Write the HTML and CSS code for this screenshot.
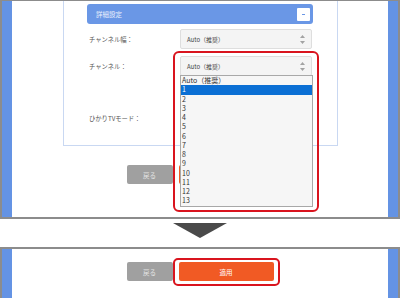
FILE: index.html
```html
<!DOCTYPE html>
<html lang="ja">
<head>
    <meta charset="UTF-8">
    <meta name="viewport" content="width=device-width, initial-scale=1.0">
    <title>詳細設定 - チャンネル</title>
    <link rel="stylesheet" href="styles.css">
</head>
<body>
    <!-- Before: channel dropdown opened -->
    <div class="panel panel-top">
        <div class="page">
            <div class="settings">
                <div class="bar">
                    <span>詳細設定</span>
                    <span class="toggle"></span>
                </div>

                <div class="row r1">
                    <span class="label">チャンネル幅：</span>
                    <div class="select">Auto（推奨）
                        <svg class="arrows" viewBox="0 0 5 9"><polygon points="2.5,0 5,3 0,3"/><polygon points="0,6 5,6 2.5,9"/></svg>
                    </div>
                </div>

                <div class="row r2">
                    <span class="label">チャンネル：</span>
                    <div class="field">
                        <div class="select">Auto（推奨）
                            <svg class="arrows" viewBox="0 0 5 9"><polygon points="2.5,0 5,3 0,3"/><polygon points="0,6 5,6 2.5,9"/></svg>
                        </div>
                        <ul class="listbox">
                            <li>Auto（推奨）</li>
                            <li class="sel">1</li>
                            <li>2</li>
                            <li>3</li>
                            <li>4</li>
                            <li>5</li>
                            <li>6</li>
                            <li>7</li>
                            <li>8</li>
                            <li>9</li>
                            <li>10</li>
                            <li>11</li>
                            <li>12</li>
                            <li>13</li>
                        </ul>
                        <div class="mark"></div>
                    </div>
                </div>

                <div class="row r3">
                    <span class="label">ひかりTVモード：</span>
                    <div class="select">オフ</div>
                </div>
            </div>

            <div class="actions top-actions">
                <button class="btn back">戻る</button>
                <button class="btn apply">適用</button>
            </div>
        </div>
    </div>

    <div class="gap"><div class="down"></div></div>

    <!-- After: press apply -->
    <div class="panel panel-bottom">
        <div class="page">
            <div class="actions bottom-actions">
                <button class="btn back">戻る</button>
                <button class="btn apply marked">適用</button>
            </div>
        </div>
    </div>
</body>
</html>
```

FILE: styles.css
```css
body {
    margin: 0;
    width: 400px;
    background: #fff;
    font-family: "Noto Sans CJK JP", "Noto Sans", sans-serif;
}
.panel {
    border: 2px solid #8c8c8c;
    border-top-width: 1px;
}
.panel-bottom {
    border-top-width: 2px;
}
.page {
    border-left: 10px solid #6493e4;
    border-right: 10px solid #6493e4;
    background: #fff;
}
.panel-top .page {
    height: 216px;
}
.panel-bottom .page {
    height: 51px;
}
.settings {
    margin: 0 50px 0 51px;
    border: 1px solid #c9d8f2;
    border-top: 0;
    padding: 3px 24px 17px 23px;
}
.bar {
    height: 20px;
    background: #6a97e6;
    border-radius: 3px;
    display: flex;
    align-items: center;
    justify-content: space-between;
    padding: 0 3px 0 9px;
    color: #e9effc;
    font-size: 6.5px;
}
.toggle {
    width: 13px;
    height: 13px;
    background: #fff;
    border-radius: 1px;
    position: relative;
}
.toggle::after {
    content: '';
    position: absolute;
    left: 5px;
    top: 6px;
    width: 3px;
    height: 1px;
    background: #6a97e6;
}
.row {
    display: flex;
    align-items: center;
    height: 20px;
}
.r1 {
    margin-top: 5px;
}
.r2 {
    margin-top: 7px;
}
.r3 {
    margin-top: 32px;
}
.label {
    width: 93px;
    padding-left: 2px;
    box-sizing: border-box;
    font-size: 6.3px;
    color: #555;
}
.field {
    position: relative;
}
.select {
    position: relative;
    width: 132px;
    height: 20px;
    box-sizing: border-box;
    border: 1px solid #dedede;
    background: #f4f4f4;
    border-radius: 2px;
    display: flex;
    align-items: center;
    padding-left: 6px;
    font-size: 6px;
    color: #444;
}
.arrows {
    position: absolute;
    right: 6px;
    top: 5px;
    width: 5px;
    height: 9px;
    fill: #a2a2a2;
}
.listbox {
    position: absolute;
    top: 19px;
    left: 0;
    width: 133px;
    height: 132px;
    box-sizing: border-box;
    margin: 0;
    padding: 0;
    list-style: none;
    border: 1px solid #a8a8a8;
    background: #f6f6f6;
    overflow: hidden;
    z-index: 2;
}
.listbox li {
    height: 9.27px;
    line-height: 9.27px;
    padding-left: 1px;
    font-size: 7px;
    color: #333;
}
.listbox .sel {
    background: #0b6fd4;
    color: #fff;
}
.mark {
    position: absolute;
    left: -7px;
    top: -5px;
    width: 146px;
    height: 161px;
    box-sizing: border-box;
    border: 2px solid #d9141e;
    border-radius: 6px;
    z-index: 3;
}
.actions {
    display: flex;
    justify-content: center;
    gap: 6px;
}
.top-actions {
    margin-top: 19px;
}
.bottom-actions {
    padding-top: 13px;
}
.btn {
    height: 19px;
    border: 0;
    border-radius: 2px;
    padding: 0;
    font-family: inherit;
    font-size: 6.5px;
    color: #fff;
}
.back {
    width: 46px;
    background: #a0a0a0;
    color: #e4e4e4;
}
.apply {
    width: 95px;
    background: #f15a24;
}
.marked {
    position: relative;
}
.marked::after {
    content: '';
    position: absolute;
    left: -6px;
    right: -6px;
    top: -4px;
    bottom: -5px;
    border: 2px solid #d9141e;
    border-radius: 5px;
}
.gap {
    height: 24px;
}
.down {
    width: 0;
    height: 0;
    margin: 4px auto 0;
    border-left: 27px solid transparent;
    border-right: 27px solid transparent;
    border-top: 15px solid #4a4a4a;
}
```
